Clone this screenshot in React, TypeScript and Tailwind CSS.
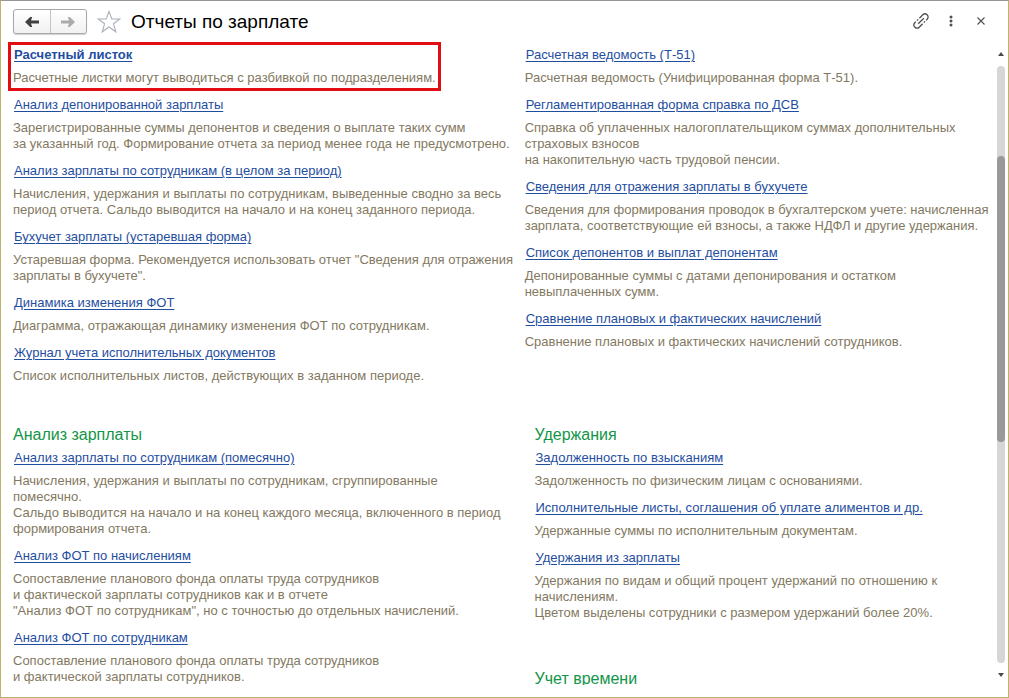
import React from "react";

type Report = { title: string; text: string; marked?: boolean };

const generalLeft: Report[] = [
  { title: "Расчетный листок", text: "Расчетные листки могут выводиться с разбивкой по подразделениям.", marked: true },
  { title: "Анализ депонированной зарплаты", text: "Зарегистрированные суммы депонентов и сведения о выплате таких сумм\nза указанный год. Формирование отчета за период менее года не предусмотрено." },
  { title: "Анализ зарплаты по сотрудникам (в целом за период)", text: "Начисления, удержания и выплаты по сотрудникам, выведенные сводно за весь\nпериод отчета. Сальдо выводится на начало и на конец заданного периода." },
  { title: "Бухучет зарплаты (устаревшая форма)", text: "Устаревшая форма. Рекомендуется использовать отчет \"Сведения для отражения\nзарплаты в бухучете\"." },
  { title: "Динамика изменения ФОТ", text: "Диаграмма, отражающая динамику изменения ФОТ по сотрудникам." },
  { title: "Журнал учета исполнительных документов", text: "Список исполнительных листов, действующих в заданном периоде." },
];

const generalRight: Report[] = [
  { title: "Расчетная ведомость (Т-51)", text: "Расчетная ведомость (Унифицированная форма Т-51)." },
  { title: "Регламентированная форма справка по ДСВ", text: "Справка об уплаченных налогоплательщиком суммах дополнительных\nстраховых взносов\nна накопительную часть трудовой пенсии." },
  { title: "Сведения для отражения зарплаты в бухучете", text: "Сведения для формирования проводок в бухгалтерском учете: начисленная\nзарплата, соответствующие ей взносы, а также НДФЛ и другие удержания." },
  { title: "Список депонентов и выплат депонентам", text: "Депонированные суммы с датами депонирования и остатком\nневыплаченных сумм." },
  { title: "Сравнение плановых и фактических начислений", text: "Сравнение плановых и фактических начислений сотрудников." },
];

const analysis: Report[] = [
  { title: "Анализ зарплаты по сотрудникам (помесячно)", text: "Начисления, удержания и выплаты по сотрудникам, сгруппированные\nпомесячно.\nСальдо выводится на начало и на конец каждого месяца, включенного в период\nформирования отчета." },
  { title: "Анализ ФОТ по начислениям", text: "Сопоставление планового фонда оплаты труда сотрудников\nи фактической зарплаты сотрудников как и в отчете\n\"Анализ ФОТ по сотрудникам\", но с точностью до отдельных начислений." },
  { title: "Анализ ФОТ по сотрудникам", text: "Сопоставление планового фонда оплаты труда сотрудников\nи фактической зарплаты сотрудников." },
];

const deductions: Report[] = [
  { title: "Задолженность по взысканиям", text: "Задолженность по физическим лицам с основаниями." },
  { title: "Исполнительные листы, соглашения об уплате алиментов и др.", text: "Удержанные суммы по исполнительным документам." },
  { title: "Удержания из зарплаты", text: "Удержания по видам и общий процент удержаний по отношению к\nначислениям.\nЦветом выделены сотрудники с размером удержаний более 20%." },
];

function ReportList({ items }: { items: Report[] }) {
  return (
    <ul className="flex flex-col gap-[11px]">
      {items.map((r) => (
        <li key={r.title} className="relative w-fit whitespace-pre text-[13px] leading-4">
          {r.marked && (
            <span className="pointer-events-none absolute -inset-x-[5px] -inset-y-[5px] border-3 border-[#e20d12]" />
          )}
          <a
            href="#"
            className={
              "ml-px block w-fit text-[#1f4ea1] underline decoration-1 underline-offset-2 " +
              (r.marked ? "font-bold" : "")
            }
          >
            {r.title}
          </a>
          <p className="mt-[7px] text-[#83795f]">{r.text}</p>
        </li>
      ))}
    </ul>
  );
}

function Heading({ children }: { children: React.ReactNode }) {
  return <h2 className="mb-[5px] text-base leading-5 text-[#129547]">{children}</h2>;
}

function Arrow({ className }: { className: string }) {
  return (
    <svg viewBox="0 0 14 12" className={"h-3 w-3.5 " + className} fill="currentColor">
      <path d="M0 6L5.2 1H7.2L6 4.6H14V7.4H6L7.2 11H5.2Z" />
    </svg>
  );
}

export default function App() {
  return (
    <div className="flex h-screen flex-col overflow-hidden border border-[#bdb36c] border-t-[#969696] bg-white font-['Liberation_Sans',Arial,sans-serif]">
      <header className="flex h-[41px] shrink-0 items-center pl-3 pr-[19px]">
        <div className="flex h-[25px] w-[74px] rounded-[3px] border border-[#a8a8a8] bg-gradient-to-b from-white to-[#f1f1f1] shadow-[0_1px_1px_#d0d0d0]">
          <button aria-label="Назад" className="flex flex-1 items-center justify-center border-r border-[#c4c4c4]">
            <Arrow className="text-[#404040]" />
          </button>
          <button aria-label="Вперед" className="flex flex-1 items-center justify-center">
            <Arrow className="rotate-180 text-[#ababab]" />
          </button>
        </div>
        <button aria-label="В избранное" className="ml-2.5">
          <svg viewBox="0 0 24 24" className="size-6" fill="none" stroke="#a9b0b8" strokeWidth="1.1">
            <path d="M12 1.5L14.8 9H22.8L16.4 13.8L18.8 21.8L12 17L5.2 21.8L7.6 13.8L1.2 9H9.2Z" />
          </svg>
        </button>
        <h1 className="ml-2.5 text-[19px] leading-6 text-black">Отчеты по зарплате</h1>
        <div className="ml-auto flex items-center pb-0.5">
          <button aria-label="Ссылка" className="flex size-5 items-center justify-center">
            <svg viewBox="0 0 16 16" className="size-4" fill="none" stroke="#505050" strokeWidth="1.3">
              <path d="M5.2 10.8L10.8 5.2" />
              <path d="M6.4 5.2L9.8 1.8C11.1.5 12.8.5 14.1 1.8S15.5 4.9 14.2 6.2L13.2 7.2M12 8.4L10.8 9.6" />
              <path d="M9.6 10.8L6.2 14.2C4.9 15.5 3.2 15.5 1.9 14.2S.5 11.1 1.8 9.8L2.8 8.8M4 7.6L5.2 6.4" />
            </svg>
          </button>
          <button aria-label="Еще" className="ml-2.5 flex size-5 items-center justify-center">
            <svg viewBox="0 0 4 12" className="h-3 w-1" fill="#505050">
              <circle cx="2" cy="2" r="1.5" />
              <circle cx="2" cy="6" r="1.5" />
              <circle cx="2" cy="10" r="1.5" />
            </svg>
          </button>
          <button aria-label="Закрыть" className="ml-3 flex h-5 w-4 items-center justify-center">
            <svg viewBox="0 0 8 8" className="size-2" stroke="#505050" strokeWidth="1.1">
              <path d="M.5.5L7.5 7.5M7.5.5L.5 7.5" />
            </svg>
          </button>
        </div>
      </header>

      <div className="mb-3 flex min-h-0 flex-1">
        <main className="min-w-0 flex-1 overflow-hidden pl-3 pt-[5px]">
          <section className="grid grid-cols-[52%_48%]">
            <ReportList items={generalLeft} />
            <ReportList items={generalRight} />
          </section>
          <div className="mt-[41px] grid grid-cols-[53%_47%]">
            <section>
              <Heading>Анализ зарплаты</Heading>
              <ReportList items={analysis} />
            </section>
            <div className="flex flex-col gap-12">
              <section>
                <Heading>Удержания</Heading>
                <ReportList items={deductions} />
              </section>
              <section>
                <Heading>Учет времени</Heading>
              </section>
            </div>
          </div>
        </main>
        <div className="mr-[3px] flex w-2 shrink-0 flex-col items-center pb-2 pt-2.5">
          <svg viewBox="0 0 6 4" className="h-1 w-1.5 shrink-0" fill="#4a4a4a">
            <path d="M0 4L3 0L6 4Z" />
          </svg>
          <div className="my-2.5 flex w-full flex-1 flex-col rounded-full bg-[#d6d6d6]">
            <div className="h-[15%]" />
            <div className="h-[48%] rounded-full bg-[#999999]" />
          </div>
          <svg viewBox="0 0 6 4" className="h-1 w-1.5 shrink-0" fill="#4a4a4a">
            <path d="M0 0L3 4L6 0Z" />
          </svg>
        </div>
      </div>
    </div>
  );
}
